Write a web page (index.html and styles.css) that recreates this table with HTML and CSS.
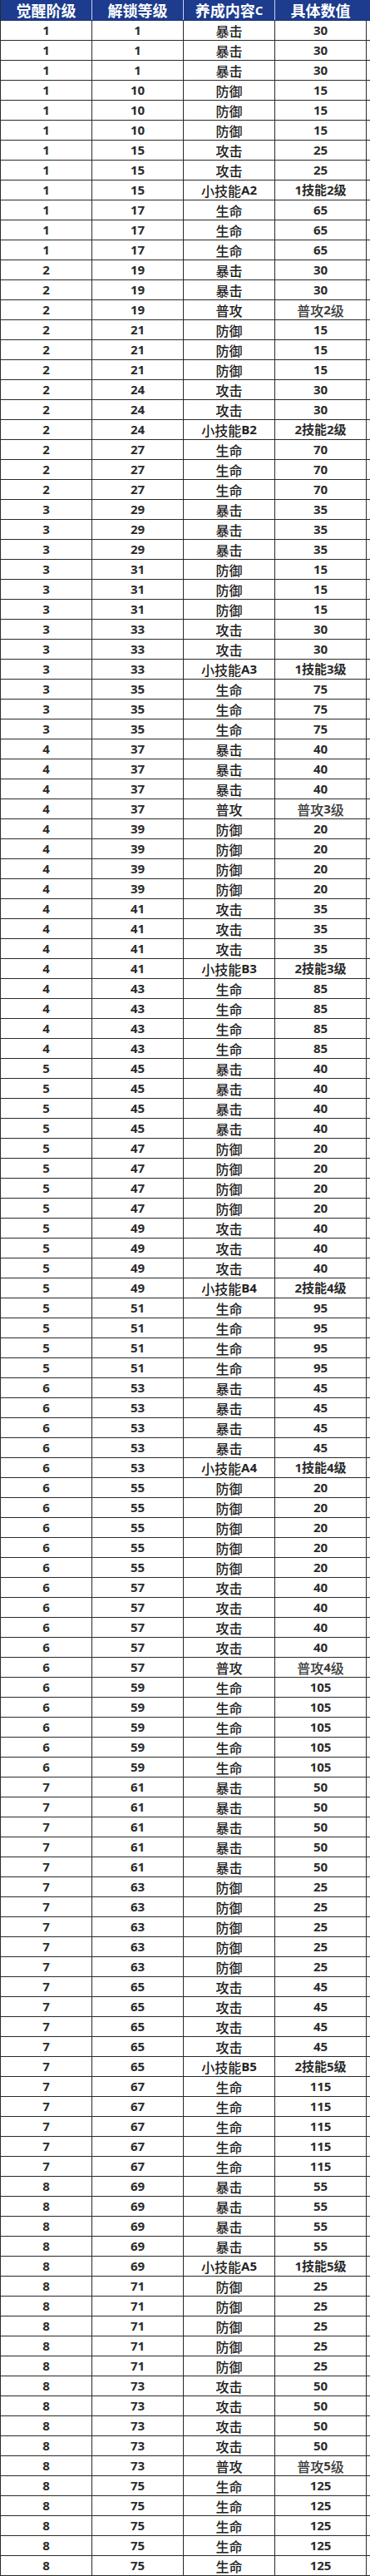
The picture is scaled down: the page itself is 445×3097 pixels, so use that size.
FILE: index.html
```html
<!DOCTYPE html>
<html lang="zh-CN">
<head>
<meta charset="utf-8">
<title>觉醒养成表</title>
<link rel="stylesheet" href="styles.css">
</head>
<body>
<div class="tbl">
<div class="r h"><span>觉醒阶级</span><span>解锁等级</span><span>养成内容<b>C</b></span><span>具体数值</span></div>
<div class="r"><span>1</span><span>1</span><span>暴击</span><span>30</span></div>
<div class="r"><span>1</span><span>1</span><span>暴击</span><span>30</span></div>
<div class="r"><span>1</span><span>1</span><span>暴击</span><span>30</span></div>
<div class="r"><span>1</span><span>10</span><span>防御</span><span>15</span></div>
<div class="r"><span>1</span><span>10</span><span>防御</span><span>15</span></div>
<div class="r"><span>1</span><span>10</span><span>防御</span><span>15</span></div>
<div class="r"><span>1</span><span>15</span><span>攻击</span><span>25</span></div>
<div class="r"><span>1</span><span>15</span><span>攻击</span><span>25</span></div>
<div class="r"><span>1</span><span>15</span><span>小技能<b>A2</b></span><span>1技能2级</span></div>
<div class="r"><span>1</span><span>17</span><span>生命</span><span>65</span></div>
<div class="r"><span>1</span><span>17</span><span>生命</span><span>65</span></div>
<div class="r"><span>1</span><span>17</span><span>生命</span><span>65</span></div>
<div class="r"><span>2</span><span>19</span><span>暴击</span><span>30</span></div>
<div class="r"><span>2</span><span>19</span><span>暴击</span><span>30</span></div>
<div class="r"><span>2</span><span>19</span><span>普攻</span><span class="pg">普攻<b>2</b>级</span></div>
<div class="r"><span>2</span><span>21</span><span>防御</span><span>15</span></div>
<div class="r"><span>2</span><span>21</span><span>防御</span><span>15</span></div>
<div class="r"><span>2</span><span>21</span><span>防御</span><span>15</span></div>
<div class="r"><span>2</span><span>24</span><span>攻击</span><span>30</span></div>
<div class="r"><span>2</span><span>24</span><span>攻击</span><span>30</span></div>
<div class="r"><span>2</span><span>24</span><span>小技能<b>B2</b></span><span>2技能2级</span></div>
<div class="r"><span>2</span><span>27</span><span>生命</span><span>70</span></div>
<div class="r"><span>2</span><span>27</span><span>生命</span><span>70</span></div>
<div class="r"><span>2</span><span>27</span><span>生命</span><span>70</span></div>
<div class="r"><span>3</span><span>29</span><span>暴击</span><span>35</span></div>
<div class="r"><span>3</span><span>29</span><span>暴击</span><span>35</span></div>
<div class="r"><span>3</span><span>29</span><span>暴击</span><span>35</span></div>
<div class="r"><span>3</span><span>31</span><span>防御</span><span>15</span></div>
<div class="r"><span>3</span><span>31</span><span>防御</span><span>15</span></div>
<div class="r"><span>3</span><span>31</span><span>防御</span><span>15</span></div>
<div class="r"><span>3</span><span>33</span><span>攻击</span><span>30</span></div>
<div class="r"><span>3</span><span>33</span><span>攻击</span><span>30</span></div>
<div class="r"><span>3</span><span>33</span><span>小技能<b>A3</b></span><span>1技能3级</span></div>
<div class="r"><span>3</span><span>35</span><span>生命</span><span>75</span></div>
<div class="r"><span>3</span><span>35</span><span>生命</span><span>75</span></div>
<div class="r"><span>3</span><span>35</span><span>生命</span><span>75</span></div>
<div class="r"><span>4</span><span>37</span><span>暴击</span><span>40</span></div>
<div class="r"><span>4</span><span>37</span><span>暴击</span><span>40</span></div>
<div class="r"><span>4</span><span>37</span><span>暴击</span><span>40</span></div>
<div class="r"><span>4</span><span>37</span><span>普攻</span><span class="pg">普攻<b>3</b>级</span></div>
<div class="r"><span>4</span><span>39</span><span>防御</span><span>20</span></div>
<div class="r"><span>4</span><span>39</span><span>防御</span><span>20</span></div>
<div class="r"><span>4</span><span>39</span><span>防御</span><span>20</span></div>
<div class="r"><span>4</span><span>39</span><span>防御</span><span>20</span></div>
<div class="r"><span>4</span><span>41</span><span>攻击</span><span>35</span></div>
<div class="r"><span>4</span><span>41</span><span>攻击</span><span>35</span></div>
<div class="r"><span>4</span><span>41</span><span>攻击</span><span>35</span></div>
<div class="r"><span>4</span><span>41</span><span>小技能<b>B3</b></span><span>2技能3级</span></div>
<div class="r"><span>4</span><span>43</span><span>生命</span><span>85</span></div>
<div class="r"><span>4</span><span>43</span><span>生命</span><span>85</span></div>
<div class="r"><span>4</span><span>43</span><span>生命</span><span>85</span></div>
<div class="r"><span>4</span><span>43</span><span>生命</span><span>85</span></div>
<div class="r"><span>5</span><span>45</span><span>暴击</span><span>40</span></div>
<div class="r"><span>5</span><span>45</span><span>暴击</span><span>40</span></div>
<div class="r"><span>5</span><span>45</span><span>暴击</span><span>40</span></div>
<div class="r"><span>5</span><span>45</span><span>暴击</span><span>40</span></div>
<div class="r"><span>5</span><span>47</span><span>防御</span><span>20</span></div>
<div class="r"><span>5</span><span>47</span><span>防御</span><span>20</span></div>
<div class="r"><span>5</span><span>47</span><span>防御</span><span>20</span></div>
<div class="r"><span>5</span><span>47</span><span>防御</span><span>20</span></div>
<div class="r"><span>5</span><span>49</span><span>攻击</span><span>40</span></div>
<div class="r"><span>5</span><span>49</span><span>攻击</span><span>40</span></div>
<div class="r"><span>5</span><span>49</span><span>攻击</span><span>40</span></div>
<div class="r"><span>5</span><span>49</span><span>小技能<b>B4</b></span><span>2技能4级</span></div>
<div class="r"><span>5</span><span>51</span><span>生命</span><span>95</span></div>
<div class="r"><span>5</span><span>51</span><span>生命</span><span>95</span></div>
<div class="r"><span>5</span><span>51</span><span>生命</span><span>95</span></div>
<div class="r"><span>5</span><span>51</span><span>生命</span><span>95</span></div>
<div class="r"><span>6</span><span>53</span><span>暴击</span><span>45</span></div>
<div class="r"><span>6</span><span>53</span><span>暴击</span><span>45</span></div>
<div class="r"><span>6</span><span>53</span><span>暴击</span><span>45</span></div>
<div class="r"><span>6</span><span>53</span><span>暴击</span><span>45</span></div>
<div class="r"><span>6</span><span>53</span><span>小技能<b>A4</b></span><span>1技能4级</span></div>
<div class="r"><span>6</span><span>55</span><span>防御</span><span>20</span></div>
<div class="r"><span>6</span><span>55</span><span>防御</span><span>20</span></div>
<div class="r"><span>6</span><span>55</span><span>防御</span><span>20</span></div>
<div class="r"><span>6</span><span>55</span><span>防御</span><span>20</span></div>
<div class="r"><span>6</span><span>55</span><span>防御</span><span>20</span></div>
<div class="r"><span>6</span><span>57</span><span>攻击</span><span>40</span></div>
<div class="r"><span>6</span><span>57</span><span>攻击</span><span>40</span></div>
<div class="r"><span>6</span><span>57</span><span>攻击</span><span>40</span></div>
<div class="r"><span>6</span><span>57</span><span>攻击</span><span>40</span></div>
<div class="r"><span>6</span><span>57</span><span>普攻</span><span class="pg">普攻<b>4</b>级</span></div>
<div class="r"><span>6</span><span>59</span><span>生命</span><span>105</span></div>
<div class="r"><span>6</span><span>59</span><span>生命</span><span>105</span></div>
<div class="r"><span>6</span><span>59</span><span>生命</span><span>105</span></div>
<div class="r"><span>6</span><span>59</span><span>生命</span><span>105</span></div>
<div class="r"><span>6</span><span>59</span><span>生命</span><span>105</span></div>
<div class="r"><span>7</span><span>61</span><span>暴击</span><span>50</span></div>
<div class="r"><span>7</span><span>61</span><span>暴击</span><span>50</span></div>
<div class="r"><span>7</span><span>61</span><span>暴击</span><span>50</span></div>
<div class="r"><span>7</span><span>61</span><span>暴击</span><span>50</span></div>
<div class="r"><span>7</span><span>61</span><span>暴击</span><span>50</span></div>
<div class="r"><span>7</span><span>63</span><span>防御</span><span>25</span></div>
<div class="r"><span>7</span><span>63</span><span>防御</span><span>25</span></div>
<div class="r"><span>7</span><span>63</span><span>防御</span><span>25</span></div>
<div class="r"><span>7</span><span>63</span><span>防御</span><span>25</span></div>
<div class="r"><span>7</span><span>63</span><span>防御</span><span>25</span></div>
<div class="r"><span>7</span><span>65</span><span>攻击</span><span>45</span></div>
<div class="r"><span>7</span><span>65</span><span>攻击</span><span>45</span></div>
<div class="r"><span>7</span><span>65</span><span>攻击</span><span>45</span></div>
<div class="r"><span>7</span><span>65</span><span>攻击</span><span>45</span></div>
<div class="r"><span>7</span><span>65</span><span>小技能<b>B5</b></span><span>2技能5级</span></div>
<div class="r"><span>7</span><span>67</span><span>生命</span><span>115</span></div>
<div class="r"><span>7</span><span>67</span><span>生命</span><span>115</span></div>
<div class="r"><span>7</span><span>67</span><span>生命</span><span>115</span></div>
<div class="r"><span>7</span><span>67</span><span>生命</span><span>115</span></div>
<div class="r"><span>7</span><span>67</span><span>生命</span><span>115</span></div>
<div class="r"><span>8</span><span>69</span><span>暴击</span><span>55</span></div>
<div class="r"><span>8</span><span>69</span><span>暴击</span><span>55</span></div>
<div class="r"><span>8</span><span>69</span><span>暴击</span><span>55</span></div>
<div class="r"><span>8</span><span>69</span><span>暴击</span><span>55</span></div>
<div class="r"><span>8</span><span>69</span><span>小技能<b>A5</b></span><span>1技能5级</span></div>
<div class="r"><span>8</span><span>71</span><span>防御</span><span>25</span></div>
<div class="r"><span>8</span><span>71</span><span>防御</span><span>25</span></div>
<div class="r"><span>8</span><span>71</span><span>防御</span><span>25</span></div>
<div class="r"><span>8</span><span>71</span><span>防御</span><span>25</span></div>
<div class="r"><span>8</span><span>71</span><span>防御</span><span>25</span></div>
<div class="r"><span>8</span><span>73</span><span>攻击</span><span>50</span></div>
<div class="r"><span>8</span><span>73</span><span>攻击</span><span>50</span></div>
<div class="r"><span>8</span><span>73</span><span>攻击</span><span>50</span></div>
<div class="r"><span>8</span><span>73</span><span>攻击</span><span>50</span></div>
<div class="r"><span>8</span><span>73</span><span>普攻</span><span class="pg">普攻<b>5</b>级</span></div>
<div class="r"><span>8</span><span>75</span><span>生命</span><span>125</span></div>
<div class="r"><span>8</span><span>75</span><span>生命</span><span>125</span></div>
<div class="r"><span>8</span><span>75</span><span>生命</span><span>125</span></div>
<div class="r"><span>8</span><span>75</span><span>生命</span><span>125</span></div>
<div class="r"><span>8</span><span>75</span><span>生命</span><span>125</span></div>
</div>
</body>
</html>
```

FILE: styles.css
```css
html, body {
  margin: 0;
  padding: 0;
  background: #ffffff;
}

.tbl {
  width: 445px;
  box-sizing: border-box;
  border-left: 1px solid #2a2a2a;
  font-family: "Open Sans", "Noto Sans CJK SC", sans-serif;
  color: #2b2b2b;
}

.r {
  display: grid;
  grid-template-columns: 110px 110px 110px 110px;
  height: 23px;
  border-bottom: 1px solid #2a2a2a;
}

.r > span {
  display: flex;
  align-items: center;
  justify-content: center;
  border-right: 1px solid #2a2a2a;
  font-size: 15px;
  font-weight: 700;
  line-height: 1;
  white-space: nowrap;
  overflow: hidden;
}

.r > span:nth-child(3) {
  font-family: "Noto Sans CJK SC", sans-serif;
  font-weight: 500;
  font-size: 16px;
  color: #222;
}

.r > span:nth-child(3) b,
.r > span.pg b {
  font-family: "Open Sans", sans-serif;
  font-weight: 700;
  font-size: 15px;
}

.r > span:nth-child(4) {
  font-family: "Open Sans", "Noto Sans CJK SC", sans-serif;
}

.r > span.pg {
  font-family: "Noto Sans CJK SC", sans-serif;
  font-weight: 500;
  font-size: 16px;
  color: #3a3a3a;
}

.r.h {
  height: 24px;
  background: #1d3c8e;
  border-bottom: 1px solid #1a2f6a;
}

.r.h > span {
  color: #ffffff;
  font-family: "Noto Sans CJK SC", sans-serif;
  font-weight: 700;
  font-size: 18px;
  border-right: 1px solid #c9d3ea;
  background: #1d3c8e;
}

.r.h > span:last-child {
  border-right: 1px solid #1d3c8e;
}

.r.h b {
  font-family: "Open Sans", sans-serif;
  font-weight: 700;
  font-size: 17px;
}
```
